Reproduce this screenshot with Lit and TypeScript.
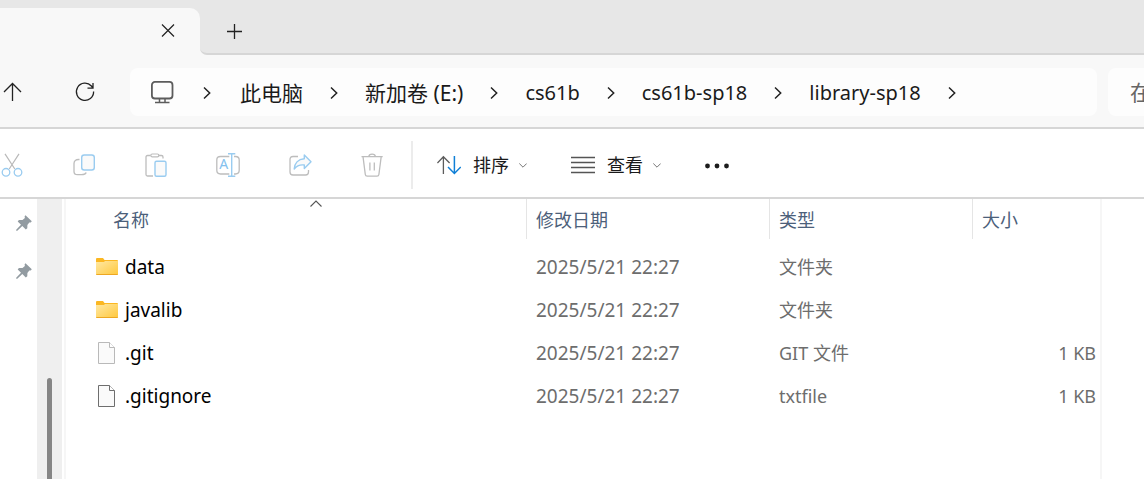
import { LitElement, html, svg, css, nothing, TemplateResult } from "lit";
import { customElement, property } from "lit/decorators.js";

type Entry = { name: string; icon: string; modified: string; type: string; size: string };

const CRUMBS = ["此电脑", "新加卷 (E:)", "cs61b", "cs61b-sp18", "library-sp18"];

const ENTRIES: Entry[] = [
  { name: "data", icon: "folder", modified: "2025/5/21 22:27", type: "文件夹", size: "" },
  { name: "javalib", icon: "folder", modified: "2025/5/21 22:27", type: "文件夹", size: "" },
  { name: ".git", icon: "file-hidden", modified: "2025/5/21 22:27", type: "GIT 文件", size: "1 KB" },
  { name: ".gitignore", icon: "file", modified: "2025/5/21 22:27", type: "txtfile", size: "1 KB" },
];

const ACTIONS = [
  ["cut", "剪切"],
  ["copy", "复制"],
  ["paste", "粘贴"],
  ["rename", "重命名"],
  ["share", "共享"],
  ["delete", "删除"],
];

const page = (stroke: string) => svg`
  <path d="M3.5 1.5H14.5L19.5 6.5V22.5H3.5Z" fill="#fafafa" stroke=${stroke}/>
  <path d="M14.5 1.5V6.5H19.5" fill="#fff" stroke=${stroke}/>`;

const ICONS: Record<string, { w: number; h: number; body: TemplateResult | unknown }> = {
  close: { w: 14, h: 14, body: svg`<path d="M1 .5 13 12.5M13 .5 1 12.5" stroke="#222" stroke-width="1.2"/>` },
  plus: { w: 16, h: 16, body: svg`<path d="M1 8.5H16M8.5 1V16" stroke="#222" stroke-width="1.3"/>` },
  up: { w: 24, h: 24, body: svg`<path d="M12.5 4V21M4 12 12.5 3.5 21 12" stroke="#222" stroke-width="1.3"/>` },
  refresh: {
    w: 24, h: 24,
    body: svg`<path d="M20.6 11.5A8.6 8.6 0 1 1 18.4 6L20 8M20 3V8.2H14.5" stroke="#222" stroke-width="1.3"/>`,
  },
  monitor: {
    w: 28, h: 24,
    body: svg`<rect x="3.9" y=".9" width="20.6" height="16.6" rx="3" stroke="#5c5c5c" stroke-width="1.8"/>
      <path d="M11.5 18V21.300M17 18V21.300M7 21.500H21.500" stroke="#5c5c5c" stroke-width="1.5"/>`,
  },
  crumb: { w: 12, h: 14, body: svg`<path d="M3 1.5 8.7 7 3 12.5" stroke="#222" stroke-width="1.5"/>` },
  cut: {
    w: 24, h: 24,
    body: svg`<path d="M5 .8 14.8 16M19 .8 9.2 16" stroke="#b9b9b9" stroke-width="1.2"/>
      <circle cx="6" cy="19.3" r="3.8" stroke="#9accf0" stroke-width="1.3"/>
      <circle cx="18" cy="19.3" r="3.8" stroke="#9accf0" stroke-width="1.3"/>`,
  },
  copy: {
    w: 24, h: 24,
    body: svg`<path d="M7.5 6.5H6.5C4 6.5 2 8 2 10.5V18.5C2 20.8 3.5 21.7 5.5 21.7H9.5C12 21.7 13.5 21.3 14.2 19.5" stroke="#bdbdbd" stroke-width="1.3"/>
      <rect x="9.7" y="2" width="12.6" height="15" rx="2.5" fill="#fafafa" stroke="#9accf0" stroke-width="1.4"/>`,
  },
  paste: {
    w: 24, h: 24,
    body: svg`<path d="M6.5 2.5H3.5Q2 2.5 2 4V21.5Q2 23 3.5 23H9M15 2.5H17.5Q19 2.5 19 4V5.5" stroke="#bdbdbd" stroke-width="1.3"/>
      <rect x="6.8" y="1" width="8" height="2.8" rx="1.4" stroke="#bdbdbd" stroke-width="1.2"/>
      <rect x="11" y="8.3" width="11" height="15" rx="1.5" fill="#fafafa" stroke="#9accf0" stroke-width="1.4"/>`,
  },
  rename: {
    w: 24, h: 24,
    body: svg`<path d="M13.3 3.5H4.5Q.8 3.5 .8 7V17.3Q.8 21 4.5 21H13.3M18 3.5H19.5Q23.2 3.5 23.2 7V17.3Q23.2 21 19.5 21H18" stroke="#bdbdbd" stroke-width="1.3"/>
      <path d="M12 .8H19.3M12 23.2H19.3M15.7 .8V23.2" stroke="#9accf0" stroke-width="1.4"/>
      <text x="7.800" y="16" text-anchor="middle" font-size="14" fill="#84c1ee">A</text>`,
  },
  share: {
    w: 24, h: 24,
    body: svg`<path d="M10 3.5H5Q2 3.5 2 6.5V19Q2 22 5 22H17.5Q20.5 22 20.5 19V17" stroke="#bdbdbd" stroke-width="1.3"/>
      <path d="M16.3 2 23 8.7 16.3 15.5V12C12 11.5 8.5 13 6.2 16 6.5 10.5 10 6.2 16.3 5.7Z" fill="#fafafa" stroke="#9accf0" stroke-width="1.4" stroke-linejoin="round"/>`,
  },
  delete: {
    w: 24, h: 24,
    body: svg`<path d="M1.5 3.7H22.7M8.8 3.7C9 .2 15.2 .2 15.4 3.7M3 3.7 5.3 21.5Q5.5 23.2 7.2 23.2H17Q18.700 23.2 18.900 21.5L21.2 3.7M9.900 9.5V17.5M14.300 9.5V17.5" stroke="#bdbdbd" stroke-width="1.3"/>`,
  },
  sort: {
    w: 24, h: 24,
    body: svg`<path d="M6.4 21V4M.4 10 6.4 3.8 12.6 10" stroke="#5c5c5c" stroke-width="1.3"/>
      <path d="M17.4 3V20.3M11 14 17.4 20.5 23.8 14" stroke="#0f7fd6" stroke-width="1.5"/>`,
  },
  view: { w: 24, h: 24, body: svg`<path d="M0 4.5H24M0 9.5H24M0 14.5H24M0 19.5H24" stroke="#555" stroke-width="1.3"/>` },
  down: { w: 8, h: 5, body: svg`<path d="M.3 .5 4 4.2 7.7 .5" stroke="#777" stroke-width="1"/>` },
  caret: { w: 12, h: 7, body: svg`<path d="M.5 6.5 6 1 11.5 6.5" stroke="#555" stroke-width="1.1"/>` },
  more: {
    w: 24, h: 24,
    body: svg`<g fill="#1c1c1c"><circle cx="2.5" cy="13" r="2.4"/><circle cx="12" cy="13" r="2.4"/><circle cx="21.5" cy="13" r="2.4"/></g>`,
  },
  pin: {
    w: 16, h: 16,
    body: svg`<path d="M9.5 .3 15.8 6.2 14.7 7.6 13.3 7.4 11.4 10 11.3 13.2 9.8 14.4 6.3 11 1.3 15.8 .2 15.8 .2 14.7 5 9.8 1.7 6.5 2.9 5.1 6.5 4.9 8.9 2.9 8.6 1.3Z" fill="#929ba1"/>`,
  },
  folder: {
    w: 24, h: 24,
    body: svg`<defs><linearGradient id="f" x1="0" y1="0" x2="1" y2="1"><stop offset="0" stop-color="#ffe8a3"/><stop offset="1" stop-color="#ffc83c"/></linearGradient></defs>
      <path d="M1 4Q1 3 2 3H8L9.5 5H22Q23 5 23 6V19H1Z" fill="#fbb722"/>
      <path d="M1 7H9L10 6H23V19Q23 20 22 20H2Q1 20 1 19Z" fill="url(#f)"/>
      <path d="M1.3 19.5H22.7" stroke="#eda722"/>`,
  },
  "file-hidden": { w: 24, h: 24, body: page("#b9b9b9") },
  file: { w: 24, h: 24, body: page("#6e6e6e") },
};

@customElement("fx-icon")
class FxIcon extends LitElement {
  @property() name = "";
  static styles = css`
    :host { display: block; flex: none; }
    svg { display: block; fill: none; font-family: "Noto Sans", sans-serif; }
  `;
  render() {
    const i = ICONS[this.name];
    return i
      ? html`<svg width=${i.w} height=${i.h} viewBox="0 0 ${i.w} ${i.h}" aria-hidden="true">${i.body}</svg>`
      : nothing;
  }
}

@customElement("app-root")
class AppRoot extends LitElement {
  static styles = css`
    :host {
      display: flex;
      flex-direction: column;
      min-height: 100vh;
      overflow: hidden;
      background: #fff;
      color: #1a1a1a;
      font: 18px/24px "Noto Sans", "Noto Sans CJK SC", sans-serif;
    }
    * { box-sizing: border-box; }
    button {
      display: flex;
      align-items: center;
      margin: 0;
      padding: 0;
      border: 0;
      background: none;
      color: inherit;
      font: inherit;
    }
    .tabs { display: flex; height: 55px; background: #e7e7e7; }
    .tab {
      display: flex;
      align-items: center;
      justify-content: flex-end;
      width: 200px;
      margin-top: 8px;
      padding: 0 25px 2px 0;
      border-top-right-radius: 10px;
      background: #f8f8f8;
    }
    .strip { flex: 1; background: linear-gradient(#e7e7e7 50%, #f8f8f8 50%); }
    .strip-fill {
      display: flex;
      align-items: center;
      height: 100%;
      padding: 8px 0 0 26px;
      border-bottom: 2px solid #d6d6d6;
      border-bottom-left-radius: 7px;
      background: #e7e7e7;
    }
    .nav {
      display: flex;
      align-items: center;
      height: 74px;
      padding-top: 2px;
      border-bottom: 2px solid #d6d6d6;
      background: #f8f8f8;
    }
    .refresh { margin: 0 33px 0 49px; }
    .address {
      display: flex;
      flex: 1;
      align-items: center;
      gap: 25px;
      height: 48px;
      margin: 0;
      padding: 2px 0 0 18px;
      border-radius: 8px;
      background: #fdfdfd;
      list-style: none;
    }
    .address li { display: flex; align-items: center; gap: 25px; }
    .address .root { padding-right: 2px; }
    .address a { color: inherit; text-decoration: none; white-space: nowrap; font-size: 20px; }
    .address a.cjk { font-size: 21px; }
    .search {
      width: 36px;
      height: 48px;
      margin: 0 0 0 11px;
      padding: 0 0 0 22px;
      border: 0;
      border-radius: 8px 0 0 8px;
      background: #fdfdfd;
      color: #666;
      font: inherit;
      font-size: 21px;
    }
    .search::placeholder { color: #666; opacity: 1; }
    .tools {
      display: flex;
      align-items: center;
      height: 70px;
      padding-top: 4px;
      border-bottom: 2px solid #d6d6d6;
    }
    .actions { display: flex; gap: 48px; padding-right: 27px; }
    .menus {
      display: flex;
      align-items: center;
      gap: 44px;
      height: 48px;
      padding-left: 24px;
      border-left: 2px solid #ececec;
    }
    .menu-text { margin: 0 10px 0 12px; }
    .body { display: flex; flex: 1; }
    .pins {
      display: flex;
      flex-direction: column;
      gap: 32px;
      width: 37px;
      padding: 16px 0 0 16px;
    }
    .scroll {
      display: flex;
      justify-content: center;
      width: 25px;
      padding-top: 179px;
      background: #efefef;
    }
    .thumb { width: 5px; border-radius: 3px 3px 0 0; background: #858585; }
    .files { flex: 1; margin-left: 2px; border-left: 2px solid #f6f6f6; }
    .details { width: 44px; border-left: 2px solid #f6f6f6; }
    table { width: 100%; border-collapse: collapse; table-layout: fixed; }
    th, td { padding: 0; font-weight: normal; text-align: left; white-space: nowrap; }
    th { height: 46px; vertical-align: top; color: #4c607a; }
    td { height: 43px; color: #6d6d6d; }
    .col-modified { width: 243px; }
    .col-type { width: 203px; }
    .col-size { width: 127px; }
    .head {
      position: relative;
      width: 100%;
      height: 40px;
      padding: 2px 0 0 9px;
      border-right: 1px solid #e5e5e5;
    }
    .col-name .head { padding-left: 47px; }
    .col-size .head { border-right: 0; }
    .caret { position: absolute; top: 1px; left: calc(50% + 14px); }
    .name { display: flex; align-items: center; gap: 6px; padding-left: 29px; color: #000; font-size: 19px; }
    .modified { padding-left: 9px; font-size: 19px; }
    .type { padding-left: 9px; }
    .size { padding-right: 4px; text-align: right; }
  `;

  private head(cls: string, label: string, sorted = false) {
    return html`<th class=${cls} scope="col" aria-sort=${sorted ? "ascending" : "none"}>
      <button class="head">${label}${sorted ? html`<fx-icon class="caret" name="caret"></fx-icon>` : nothing}</button>
    </th>`;
  }

  private menu(icon: string, label: string) {
    return html`<button aria-haspopup="menu">
      <fx-icon name=${icon}></fx-icon><span class="menu-text">${label}</span><fx-icon name="down"></fx-icon>
    </button>`;
  }

  render() {
    return html`
      <header class="tabs">
        <div class="tab"><button aria-label="关闭标签页"><fx-icon name="close"></fx-icon></button></div>
        <div class="strip">
          <div class="strip-fill"><button aria-label="新建标签页"><fx-icon name="plus"></fx-icon></button></div>
        </div>
      </header>
      <nav class="nav">
        <button aria-label="向上"><fx-icon name="up"></fx-icon></button>
        <button class="refresh" aria-label="刷新"><fx-icon name="refresh"></fx-icon></button>
        <ol class="address">
          <li class="root"><fx-icon name="monitor"></fx-icon><fx-icon name="crumb"></fx-icon></li>
          ${CRUMBS.map(
            (c) => html`<li>
              <a class=${/[\u4e00-\u9fff]/.test(c) ? "cjk" : "latin"} href="#">${c}</a><fx-icon name="crumb"></fx-icon>
            </li>`
          )}
        </ol>
        <input class="search" type="text" aria-label="搜索" placeholder="在" />
      </nav>
      <div class="tools">
        <div class="actions">
          ${ACTIONS.map(([icon, label]) => html`<button aria-label=${label} disabled><fx-icon name=${icon}></fx-icon></button>`)}
        </div>
        <div class="menus">
          ${this.menu("sort", "排序")} ${this.menu("view", "查看")}
          <button aria-label="查看更多"><fx-icon name="more"></fx-icon></button>
        </div>
      </div>
      <div class="body">
        <aside class="pins"><fx-icon name="pin"></fx-icon><fx-icon name="pin"></fx-icon></aside>
        <div class="scroll"><div class="thumb"></div></div>
        <main class="files">
          <table>
            <thead>
              <tr>
                ${this.head("col-name", "名称", true)} ${this.head("col-modified", "修改日期")}
                ${this.head("col-type", "类型")} ${this.head("col-size", "大小")}
              </tr>
            </thead>
            <tbody>
              ${ENTRIES.map(
                (e) => html`<tr>
                  <td><div class="name"><fx-icon name=${e.icon}></fx-icon><span>${e.name}</span></div></td>
                  <td class="modified">${e.modified}</td>
                  <td class="type">${e.type}</td>
                  <td class="size">${e.size}</td>
                </tr>`
              )}
            </tbody>
          </table>
        </main>
        <aside class="details"></aside>
      </div>
    `;
  }
}
